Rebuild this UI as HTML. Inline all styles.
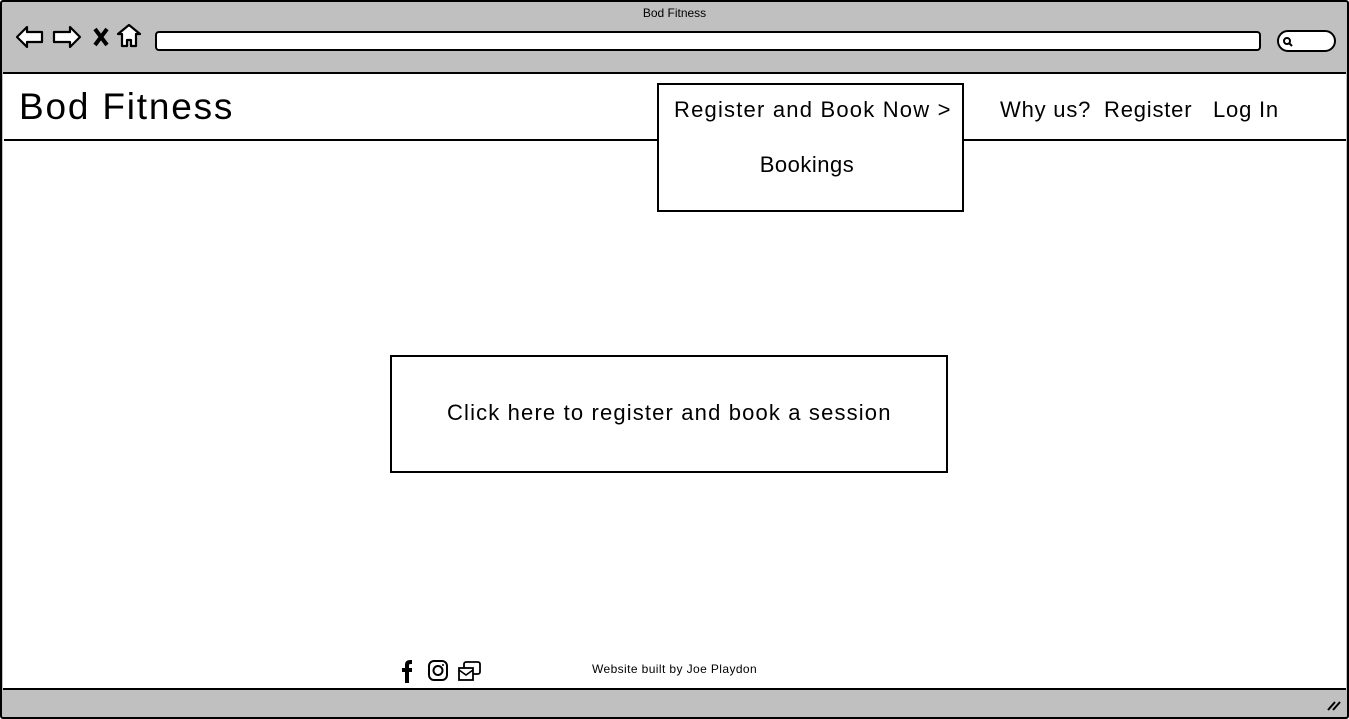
<!DOCTYPE html>
<html><head><style>
*{box-sizing:border-box;margin:0;padding:0}
body{width:1349px;height:719px;background:#fff;font-family:"Liberation Sans",sans-serif;position:relative;overflow:hidden;color:#000}
.a{position:absolute;white-space:nowrap}
.b{border:2px solid #000}
.n{top:97px;font-size:22px;letter-spacing:0.8px}
</style></head><body>
<div class="a" style="left:0;top:0;width:1349px;height:719px;background:#c0c0c0;border:2px solid #000;border-radius:3px"></div>
<div class="a" style="left:3px;top:72px;width:1343px;height:618px;background:#fff;border-top:2px solid #000;border-bottom:2px solid #000"></div>
<div class="a" style="left:0;top:6px;width:1349px;text-align:center;font-size:12px">Bod Fitness</div>
<svg class="a" style="left:14px;top:22px" width="130" height="30" viewBox="0 0 130 30">
<g fill="#fff" stroke="#000" stroke-width="2.2" stroke-linejoin="round">
<path d="M3 15 L13 5 L13 10 L28 10 L28 20 L13 20 L13 25 Z"/>
<path d="M66 15 L56 5 L56 10 L40 10 L40 20 L56 20 L56 25 Z"/>
<path d="M104 12 L115 3 L126 12 L122 12 L122 24 L117 24 L117 18 L113 18 L113 24 L108 24 L108 12 Z"/>
</g>
<path d="M81 7 L93 23 M93 7 L81 23" stroke="#000" stroke-width="4"/>
</svg>
<div class="a b" style="left:155px;top:31px;width:1106px;height:20px;background:#fff;border-radius:4px"></div>
<div class="a b" style="left:1277px;top:30px;width:59px;height:22px;background:#fff;border-radius:11px"></div>
<svg class="a" style="left:1282px;top:36px" width="12" height="12"><circle cx="5" cy="5" r="3" fill="none" stroke="#000" stroke-width="2"/><path d="M7 7 L10 10" stroke="#000" stroke-width="2"/></svg>
<div class="a" style="left:4px;top:139px;width:1342px;border-top:2px solid #000"></div>
<div class="a" style="left:19px;top:86px;font-size:37px;letter-spacing:1.8px">Bod Fitness</div>
<div class="a b" style="left:657px;top:83px;width:307px;height:129px;background:#fff"></div>
<div class="a" style="left:674px;top:97px;font-size:22px;letter-spacing:1.2px">Register and Book Now &gt;</div>
<div class="a" style="left:657px;top:152px;width:300px;text-align:center;font-size:22px;letter-spacing:0.5px">Bookings</div>
<div class="a n" style="left:1000px">Why us?</div>
<div class="a n" style="left:1104px">Register</div>
<div class="a n" style="left:1213px">Log In</div>
<div class="a b" style="left:390px;top:355px;width:558px;height:118px"></div>
<div class="a" style="left:447px;top:400px;font-size:22px;letter-spacing:1.15px">Click here to register and book a session</div>
<svg class="a" style="left:398px;top:658px" width="90" height="26" viewBox="0 0 90 26">
<path d="M12 2 Q7 2 7 7 L7 10 L4 10 L4 14 L7 14 L7 25 L11 25 L11 14 L14 14 L14 10 L11 10 L11 7 Q11 6 13 6 L14 6 L14 2 Z" fill="#000"/>
<rect x="31" y="3" width="18" height="19" rx="5" fill="none" stroke="#000" stroke-width="2"/>
<circle cx="40" cy="12.5" r="4.5" fill="none" stroke="#000" stroke-width="2"/>
<circle cx="45" cy="7" r="1" fill="#000"/>
<rect x="66" y="4" width="16" height="12" rx="2" fill="none" stroke="#000" stroke-width="1.8"/>
<rect x="61" y="10" width="14" height="12" fill="#fff" stroke="#000" stroke-width="1.8"/>
<path d="M61 12 L68 17 L75 12" fill="none" stroke="#000" stroke-width="1.6"/>
</svg>
<div class="a" style="left:592px;top:662px;font-size:12px;letter-spacing:0.4px">Website built by Joe Playdon</div>
<svg class="a" style="left:1326px;top:698px" width="16" height="14"><path d="M2 12 L9 4 M7 12 L14 4" stroke="#000" stroke-width="2"/></svg>
</body></html>
